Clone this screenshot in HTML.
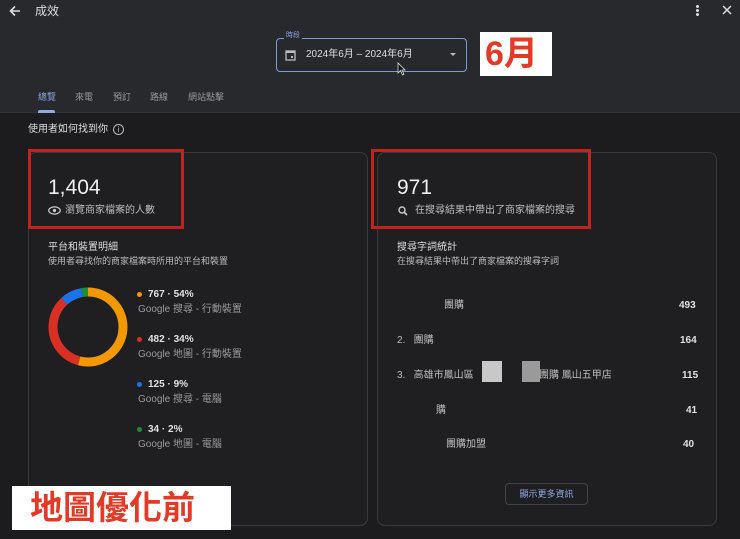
<!DOCTYPE html>
<html><head><meta charset="utf-8">
<style>
*{margin:0;padding:0;box-sizing:border-box}
body{width:740px;height:539px;overflow:hidden;background:#1c1c1e;font-family:"Liberation Sans","Noto Sans CJK TC",sans-serif;color:#e3e3e3;position:relative}
.a{position:absolute;white-space:nowrap;line-height:1.2}
.hdr{position:absolute;left:0;top:0;width:740px;height:113px;background:#28292c;border-bottom:1px solid #333}
.card{position:absolute;border:1px solid #3a3a3d;border-radius:8px;background:#1f1f21}
.red{position:absolute;border:3px solid #c4231c}
.sm{font-size:10px;color:#bdbdbd}
.g{font-size:10px;color:#9a9a9a}
.v{font-size:10px;color:#e0e0e0;font-weight:bold}
.dot{position:absolute;width:5px;height:5px;border-radius:50%}
</style></head><body>
<div class="hdr"></div>
<svg class="a" style="left:8px;top:4px" width="14" height="14" viewBox="0 0 14 14"><path d="M12 7H3M7 2.5L2.5 7 7 11.5" stroke="#ddd" stroke-width="1.6" fill="none"/></svg>
<div class="a" style="left:35px;top:4px;font-size:12px;color:#ddd">成效</div>
<div class="a" style="left:696px;top:5px;width:3px;height:3px;background:#ddd;border-radius:50%;box-shadow:0 4px #ddd,0 8px #ddd"></div>
<svg class="a" style="left:721px;top:4px" width="12" height="12"><path d="M2 2L10 10M10 2L2 10" stroke="#ddd" stroke-width="1.5"/></svg>
<div class="a" style="left:276px;top:38px;width:191px;height:34px;border:1.5px solid #7b9be0;border-radius:4px"></div>
<div class="a" style="left:284px;top:32px;font-size:7px;color:#8fa8e8;background:#28292c;padding:0 2px">時段</div>
<svg class="a" style="left:285px;top:49px" width="11" height="12"><rect x="1" y="2" width="9" height="9" fill="none" stroke="#bbb" stroke-width="1.3"/><rect x="1" y="2" width="9" height="2" fill="#bbb"/><rect x="6" y="7" width="2" height="2" fill="#bbb"/></svg>
<div class="a" style="left:306px;top:49px;font-size:10px;color:#ddd">2024年6月 – 2024年6月</div>
<div class="a" style="left:450px;top:53px;border:3px solid transparent;border-top:3px solid #bbb"></div>
<svg class="a" style="left:397px;top:62px" width="10" height="14"><path d="M1 1V11L3.5 8.5 5.5 13 7 12.3 5 8H8Z" fill="#111" stroke="#ddd" stroke-width="0.8"/></svg>
<div class="a" style="left:480px;top:32px;width:72px;height:44px;background:#fff"></div>
<div class="a" style="left:485px;top:33px;font-size:34px;font-weight:bold;color:#e23a26;line-height:42px">6月</div>
<div class="a" style="left:38px;top:92px;font-size:9px;color:#8fa8e8">總覽</div>
<div class="a" style="left:38px;top:110px;width:17px;height:3px;background:#8fa8e8;border-radius:2px 2px 0 0"></div>
<div class="a" style="left:75px;top:92px;font-size:9px;color:#999">來電</div>
<div class="a" style="left:113px;top:92px;font-size:9px;color:#999">預訂</div>
<div class="a" style="left:150px;top:92px;font-size:9px;color:#999">路線</div>
<div class="a" style="left:188px;top:92px;font-size:9px;color:#999">網站點擊</div>
<div class="a" style="left:28px;top:124px;font-size:10px;color:#ddd">使用者如何找到你</div>
<div class="a" style="left:113px;top:124px;width:11px;height:11px;border:1px solid #bbb;border-radius:50%;font-size:8px;text-align:center;line-height:9px;color:#bbb">i</div>

<div class="card" style="left:28px;top:152px;width:340px;height:374px"></div>
<div class="card" style="left:377px;top:152px;width:340px;height:374px"></div>
<div class="red" style="left:28px;top:149px;width:156px;height:80px"></div>
<div class="red" style="left:371px;top:149px;width:220px;height:80px"></div>

<div class="a" style="left:48px;top:175px;font-size:21px;color:#eee">1,404</div>
<svg class="a" style="left:48px;top:206px" width="13" height="9"><ellipse cx="6.5" cy="4.5" rx="5.8" ry="3.6" fill="none" stroke="#ccc" stroke-width="1.2"/><circle cx="6.5" cy="4.5" r="1.6" fill="#ccc"/></svg>
<div class="a sm" style="left:65px;top:205px">瀏覽商家檔案的人數</div>
<div class="a" style="left:48px;top:242px;font-size:10px;color:#ddd">平台和裝置明細</div>
<div class="a" style="left:48px;top:256px;font-size:9px;color:#bbb">使用者尋找你的商家檔案時所用的平台和裝置</div>
<svg class="a" style="left:48px;top:287px" width="80" height="80" viewBox="0 0 80 80">
<g transform="rotate(-90 40 40)" fill="none" stroke-width="9">
<circle cx="40" cy="40" r="35" stroke="#f29900" stroke-dasharray="118.8 220" stroke-dashoffset="0"/>
<circle cx="40" cy="40" r="35" stroke="#d93025" stroke-dasharray="74.8 220" stroke-dashoffset="-118.8"/>
<circle cx="40" cy="40" r="35" stroke="#1a73e8" stroke-dasharray="19.8 220" stroke-dashoffset="-193.6"/>
<circle cx="40" cy="40" r="35" stroke="#1e8e3e" stroke-dasharray="6.5 220" stroke-dashoffset="-213.4"/>
</g></svg>
<div class="dot" style="left:137px;top:292px;background:#f29900"></div>
<div class="a v" style="left:148px;top:289px">767 · 54%</div>
<div class="a g" style="left:138px;top:304px">Google 搜尋 - 行動裝置</div>
<div class="dot" style="left:137px;top:337px;background:#d93025"></div>
<div class="a v" style="left:148px;top:334px">482 · 34%</div>
<div class="a g" style="left:138px;top:349px">Google 地圖 - 行動裝置</div>
<div class="dot" style="left:137px;top:382px;background:#1a73e8"></div>
<div class="a v" style="left:148px;top:379px">125 · 9%</div>
<div class="a g" style="left:138px;top:394px">Google 搜尋 - 電腦</div>
<div class="dot" style="left:137px;top:427px;background:#1e8e3e"></div>
<div class="a v" style="left:148px;top:424px">34 · 2%</div>
<div class="a g" style="left:138px;top:439px">Google 地圖 - 電腦</div>
<div class="a" style="left:12px;top:486px;width:219px;height:44px;background:#fff"></div>
<div class="a" style="left:30px;top:487px;font-size:33px;font-weight:bold;color:#e23a26;line-height:42px">地圖優化前</div>

<div class="a" style="left:397px;top:175px;font-size:21px;color:#eee">971</div>
<svg class="a" style="left:398px;top:206px" width="10" height="10"><circle cx="4" cy="4" r="3" fill="none" stroke="#ccc" stroke-width="1.4"/><path d="M6 6L9 9" stroke="#ccc" stroke-width="1.6"/></svg>
<div class="a sm" style="left:415px;top:205px">在搜尋結果中帶出了商家檔案的搜尋</div>
<div class="a" style="left:397px;top:242px;font-size:10px;color:#ddd">搜尋字詞統計</div>
<div class="a" style="left:397px;top:256px;font-size:9px;color:#bbb">在搜尋結果中帶出了商家檔案的搜尋字詞</div>
<div class="a sm" style="left:444px;top:300px">團購</div><div class="a v" style="left:679px;top:300px">493</div>
<div class="a sm" style="left:397px;top:335px">2.&nbsp;&nbsp;&nbsp;團購</div><div class="a v" style="left:680px;top:335px">164</div>
<div class="a sm" style="left:397px;top:370px">3.&nbsp;&nbsp;&nbsp;高雄市鳳山區</div>
<div class="a" style="left:482px;top:361px;width:20px;height:21px;background:#c8c8c8"></div>
<div class="a" style="left:522px;top:361px;width:18px;height:21px;background:#9a9a9a"></div>
<div class="a sm" style="left:539px;top:370px">團購 鳳山五甲店</div><div class="a v" style="left:682px;top:370px">115</div>
<div class="a sm" style="left:436px;top:405px">購</div><div class="a v" style="left:686px;top:405px">41</div>
<div class="a sm" style="left:446px;top:439px">團購加盟</div><div class="a v" style="left:683px;top:439px">40</div>
<div class="a" style="left:505px;top:483px;width:83px;height:22px;border:1px solid #444;border-radius:4px;font-size:9px;color:#8fa8e8;text-align:center;line-height:20px">顯示更多資訊</div>
</body></html>
